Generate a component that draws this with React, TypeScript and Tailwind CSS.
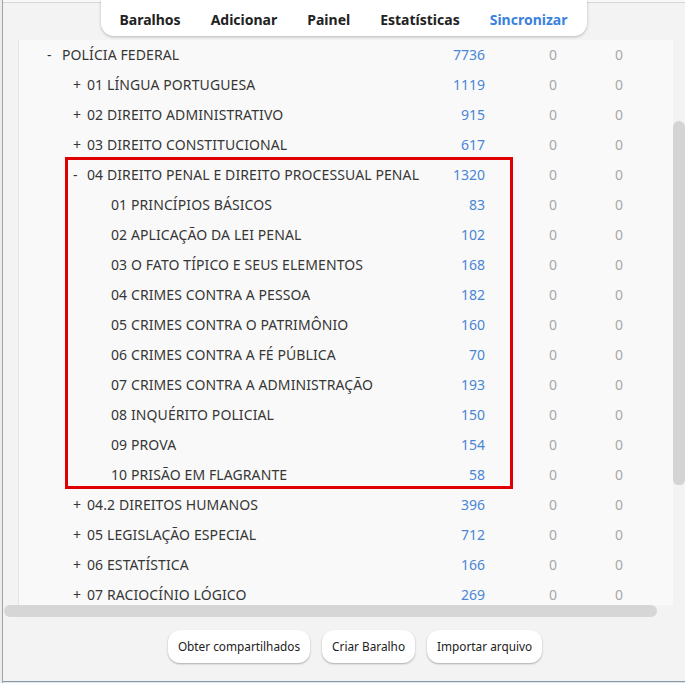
import React from "react";

type Row = { name: string; count: number; level: 0 | 1 | 2; sign?: "+" | "-" };

const rows: Row[] = [
  { name: "POLÍCIA FEDERAL", count: 7736, level: 0, sign: "-" },
  { name: "01 LÍNGUA PORTUGUESA", count: 1119, level: 1, sign: "+" },
  { name: "02 DIREITO ADMINISTRATIVO", count: 915, level: 1, sign: "+" },
  { name: "03 DIREITO CONSTITUCIONAL", count: 617, level: 1, sign: "+" },
  { name: "04 DIREITO PENAL E DIREITO PROCESSUAL PENAL", count: 1320, level: 1, sign: "-" },
  { name: "01 PRINCÍPIOS BÁSICOS", count: 83, level: 2 },
  { name: "02 APLICAÇÃO DA LEI PENAL", count: 102, level: 2 },
  { name: "03 O FATO TÍPICO E SEUS ELEMENTOS", count: 168, level: 2 },
  { name: "04 CRIMES CONTRA A PESSOA", count: 182, level: 2 },
  { name: "05 CRIMES CONTRA O PATRIMÔNIO", count: 160, level: 2 },
  { name: "06 CRIMES CONTRA A FÉ PÚBLICA", count: 70, level: 2 },
  { name: "07 CRIMES CONTRA A ADMINISTRAÇÃO", count: 193, level: 2 },
  { name: "08 INQUÉRITO POLICIAL", count: 150, level: 2 },
  { name: "09 PROVA", count: 154, level: 2 },
  { name: "10 PRISÃO EM FLAGRANTE", count: 58, level: 2 },
  { name: "04.2 DIREITOS HUMANOS", count: 396, level: 1, sign: "+" },
  { name: "05 LEGISLAÇÃO ESPECIAL", count: 712, level: 1, sign: "+" },
  { name: "06 ESTATÍSTICA", count: 166, level: 1, sign: "+" },
  { name: "07 RACIOCÍNIO LÓGICO", count: 269, level: 1, sign: "+" },
];

const font = { fontFamily: '"Noto Sans", "Open Sans", sans-serif' } as const;

function DeckRow({ row }: { row: Row }) {
  const pad =
    row.level === 0 ? "pl-[28px]" : row.level === 1 ? "pl-[54px]" : "pl-[92px]";
  return (
    <div className="flex h-[30px] items-center text-[14px] leading-none">
      <div className={`flex flex-1 items-center ${pad} text-[#363636] whitespace-nowrap`}>
        {row.sign && (
          <span className={row.level === 0 ? "w-[15px]" : "w-[14px]"}>{row.sign}</span>
        )}
        <span className="tracking-[0.1px]">{row.name}</span>
      </div>
      <div className="w-[60px] text-right text-[#4a86d6]">{row.count}</div>
      <div className="ml-[34px] w-[68px] text-center text-[#a8a8a8]">0</div>
      <div className="w-[64px] text-center text-[#a8a8a8]">0</div>
      <div className="w-[22px]" />
    </div>
  );
}

export default function App() {
  return (
    <div
      className="relative flex h-[683px] w-[685px] overflow-hidden bg-[#f3f3f3]"
      style={font}
    >
      <div className="w-[3px] shrink-0 border-r border-[#a3a3a3] bg-[#ececec]" />
      <div className="flex flex-1 flex-col">
        <div className="h-[3px] border-b border-[#d6d6d6] bg-[#f8f8f8]" />
        <div className="-mt-[3px] flex justify-center pr-[1px]">
          <nav className="relative z-10 flex h-[36px] items-center rounded-b-[13px] bg-white px-[4px] pt-[3px] shadow-[0_1px_3px_rgba(0,0,0,0.25)]">
            {["Baralhos", "Adicionar", "Painel", "Estatísticas"].map((t) => (
              <span key={t} className="px-[15px] text-[14px] font-bold text-[#222]">
                {t}
              </span>
            ))}
            <span className="px-[15px] text-[14px] font-bold text-[#3b82dd]">Sincronizar</span>
          </nav>
        </div>
        <div className="mt-[4px] flex h-[565px]">
          <div className="ml-[15px] relative flex-1 overflow-hidden border-l border-[#e6e6e6] bg-[#f9f9f9]">
            {rows.map((r, i) => (
              <DeckRow key={i} row={r} />
            ))}
            <div className="absolute left-[46px] top-[117px] h-[332px] w-[448px] border-[3px] border-[#e00000]" />
          </div>
          <div className="w-[12px] pt-[81px]">
            <div className="h-[364px] rounded-t-[7px] rounded-b-[6px] bg-[#d4d4d4]" />
          </div>
        </div>
        <div className="flex">
          <div className="ml-[1px] h-[12px] w-[653px] rounded-full bg-[#d6d6d6]" />
        </div>
        <div className="mt-[13px] flex justify-center gap-[12px] pl-[22px]">
          {["Obter compartilhados", "Criar Baralho", "Importar arquivo"].map((t) => (
            <button
              key={t}
              className="h-[33px] rounded-[12px] bg-white px-[10px] text-[11.8px] text-[#222] shadow-[0_1px_2px_rgba(0,0,0,0.3)]"
            >
              {t}
            </button>
          ))}
        </div>
        <div className="flex-1" />
        <div className="h-[2px] border-t border-[#8a9aa8] bg-[#dbe6ee]" />
      </div>
    </div>
  );
}
